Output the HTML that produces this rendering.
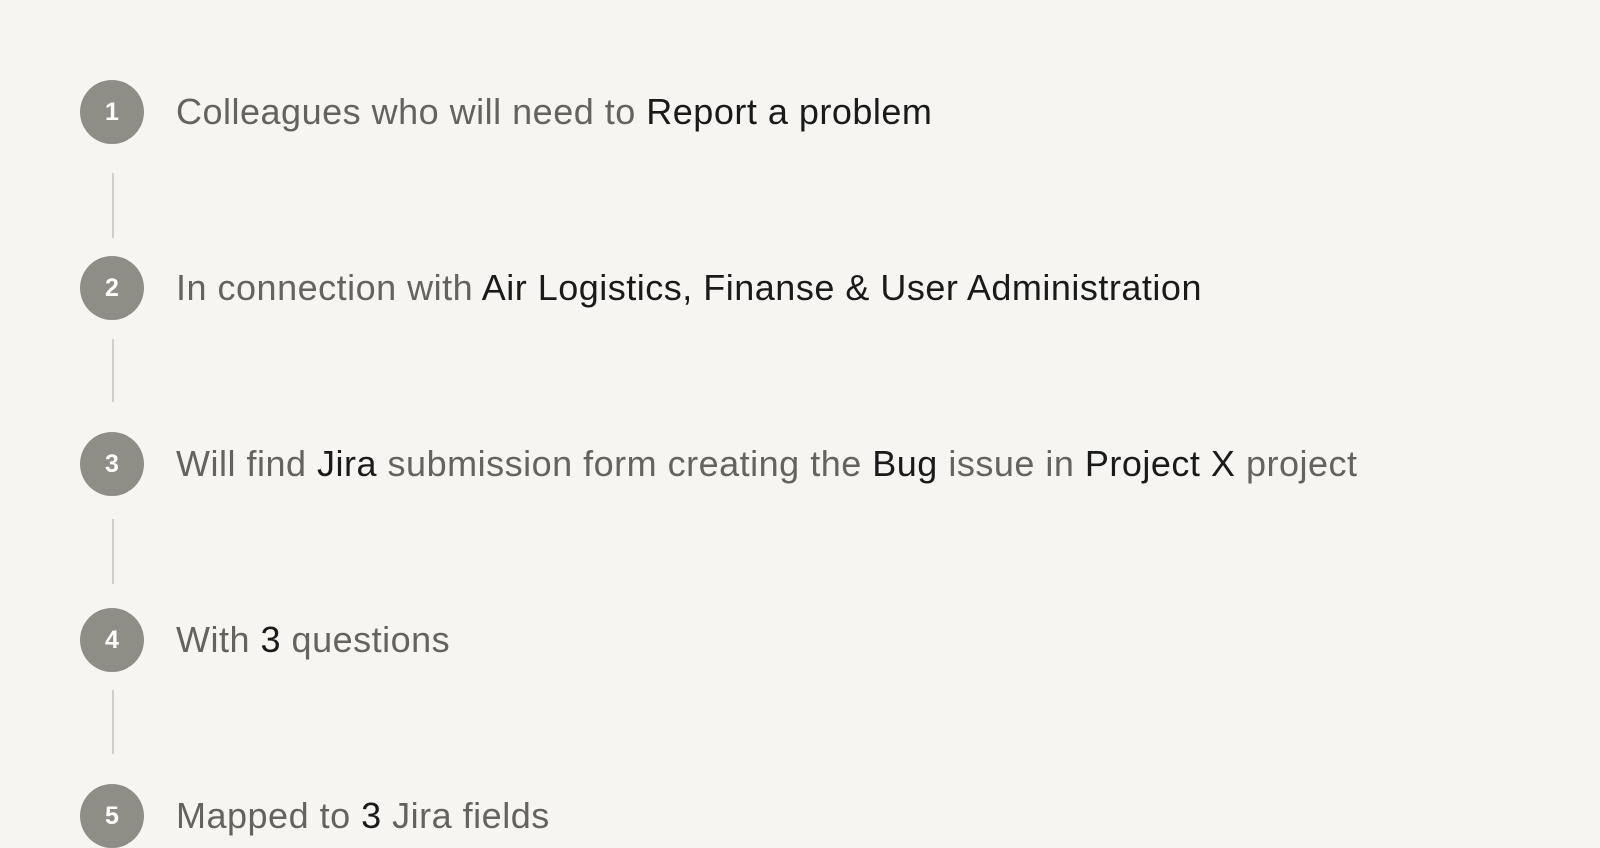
<!DOCTYPE html>
<html><head><style>
body{margin:0;width:1600px;height:820px;background:#f6f5f1;overflow:hidden;position:relative;font-family:"Liberation Sans",sans-serif}
.c{position:absolute;left:80px;width:64px;height:64px;border-radius:50%;background:#8f8e86;color:#fff;font-weight:bold;font-size:25px;display:flex;align-items:center;justify-content:center}
.t{position:absolute;left:176px;font-size:36px;color:#64635e;line-height:64px;white-space:nowrap;letter-spacing:0.5px}
.t b{font-weight:normal;color:#1a1a1a}
.l{position:absolute;left:112px;width:2px;background:#cfcec9}
</style></head><body>
<div class="c" style="top:80px">1</div><div class="t" style="top:80px">Colleagues who will need to <b>Report a problem</b></div>
<div class="l" style="top:173px;height:65px"></div>
<div class="c" style="top:256px">2</div><div class="t" style="top:256px">In connection with <b>Air Logistics, Finanse &amp; User Administration</b></div>
<div class="l" style="top:339px;height:63px"></div>
<div class="c" style="top:432px">3</div><div class="t" style="top:432px">Will find <b>Jira</b> submission form creating the <b>Bug</b> issue in <b>Project X</b> project</div>
<div class="l" style="top:519px;height:65px"></div>
<div class="c" style="top:608px">4</div><div class="t" style="top:608px">With <b>3</b> questions</div>
<div class="l" style="top:690px;height:64px"></div>
<div class="c" style="top:784px">5</div><div class="t" style="top:784px">Mapped to <b>3</b> Jira fields</div>
</body></html>
